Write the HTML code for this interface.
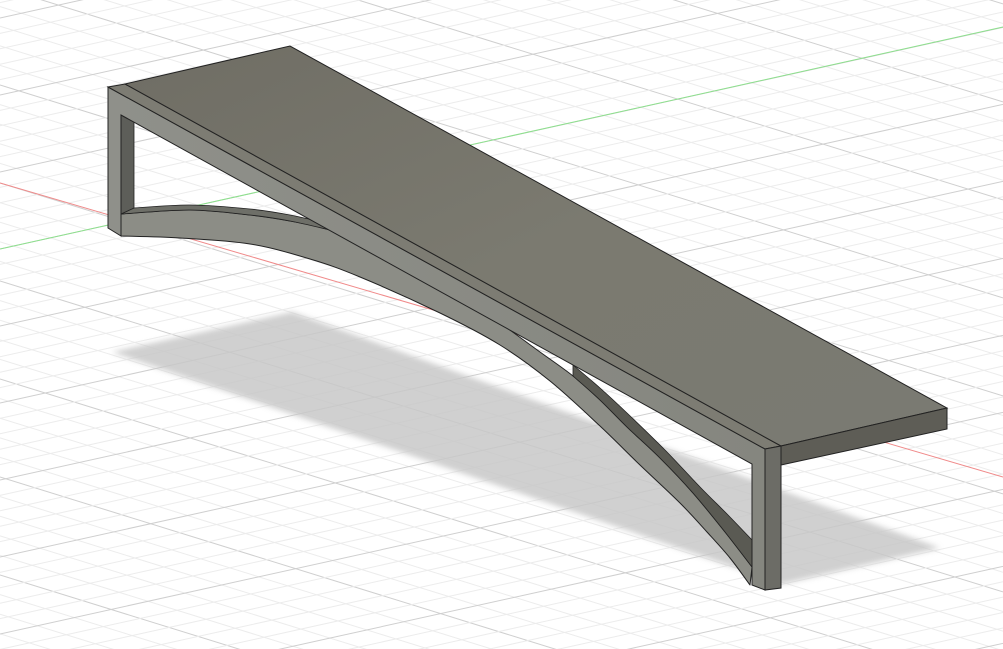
<!DOCTYPE html>
<html><head><meta charset="utf-8"><style>
html,body{margin:0;padding:0;background:#fff;overflow:hidden;width:1003px;height:649px}
svg{display:block;overflow:hidden}
</style></head><body>
<svg id="s" width="1003" height="649" viewBox="0 0 1003 649" xmlns="http://www.w3.org/2000/svg">
<defs>
<filter id="bl" x="-10%" y="-10%" width="120%" height="120%"><feGaussianBlur stdDeviation="3"/></filter>
<linearGradient id="top" x1="0" y1="0" x2="1" y2="1">
<stop offset="0" stop-color="#6f6d64"/><stop offset="0.5" stop-color="#7b7a70"/><stop offset="1" stop-color="#7a7a72"/>
</linearGradient>
<linearGradient id="fr" x1="0" y1="0" x2="1" y2="0">
<stop offset="0" stop-color="#8f908a"/><stop offset="1" stop-color="#85867f"/>
</linearGradient>
</defs>
<g id="grid"></g>
<line x1="0" y1="183" x2="1003" y2="477" stroke="#f08a8a" stroke-width="1"/>
<line x1="0" y1="249" x2="1003" y2="27" stroke="#8de08d" stroke-width="1"/>
<polygon points="112,352 292,312 940,548 782,584" fill="#c8c8c8" opacity="0.85" filter="url(#bl)"/>
<path id="arc" fill="#8c8d86" stroke="#222" stroke-width="1" stroke-linejoin="round"/>
<path id="dl" fill="#6e6f68" stroke="#222" stroke-width="0.8"/>
<path id="dr" fill="#5a5a53" stroke="#222" stroke-width="0.8" stroke-linejoin="round"/>
<path d="M121,115 L134,122 L134,208 L121,214 Z" fill="#5d5e59" stroke="#222" stroke-width="0.8"/>
<path d="M108,87 L765,449 L765,590 L752,585 L752,464 L121,115 L121,236 L108,228 Z" fill="url(#fr)" stroke="#222" stroke-width="1"/>
<polygon points="108,87 125,84 781,446 765,449" fill="#7d7c73" stroke="#222" stroke-width="1"/>
<polygon points="765,449 781,446 781,588 765,590" fill="#6c6c66" stroke="#222" stroke-width="1"/>
<polygon points="125,84 290,46 947,408 781,446" fill="url(#top)" stroke="#222" stroke-width="1"/>
<polygon points="781,446 947,408 947,429 781,465" fill="#5e5d56" stroke="#222" stroke-width="1"/>
</svg>
<script>
var g=document.getElementById('grid'),ns='http://www.w3.org/2000/svg';
function L(x1,y1,x2,y2,c){var l=document.createElementNS(ns,'line');l.setAttribute('x1',x1);l.setAttribute('y1',y1);l.setAttribute('x2',x2);l.setAttribute('y2',y2);l.setAttribute('stroke',c);l.setAttribute('stroke-width','1');g.appendChild(l);}
for(var i=-60;i<60;i++){var y=183+i*19.6;L(0,y,1003,y+1003*0.31,(i%5==0)?'#cfcfcf':'#ececec');}
for(var j=-80;j<80;j++){var y=249+j*15.4;L(0,y,1003,y-1003*0.221,(j%5==0)?'#cfcfcf':'#ececec');}
function cr(p,start){var d=start?'M'+p[0]+','+p[1]:'L'+p[0]+','+p[1];var n=p.length/2;
for(var k=0;k<n-1;k++){var i0=Math.max(k-1,0),i3=Math.min(k+2,n-1);
var x0=p[2*i0],y0=p[2*i0+1],x1=p[2*k],y1=p[2*k+1],x2=p[2*k+2],y2=p[2*k+3],x3=p[2*i3],y3=p[2*i3+1];
d+=' C'+(x1+(x2-x0)/6)+','+(y1+(y2-y0)/6)+' '+(x2-(x3-x1)/6)+','+(y2-(y3-y1)/6)+' '+x2+','+y2;}
return d;}
var outer=[121,236,180,238,250,244,310,259,360,277,440,313,500,345,550,381,600,426,640,465,680,503,707,532,730,558,750,585];
var topE=[752,567,725,532,693,493,660,458,627,427,600,400,573,376,540,352,490,316,440,284,390,254,330,230,290,221,250,215,190,210,121,214];
document.getElementById('arc').setAttribute('d',cr(outer,true)+' '+cr(topE,false)+' Z');
var dlt=[121,214,190,210,250,215,290,221,330,230];
var dlb=[330,224,290,215,250,209,190,205,134,208];
document.getElementById('dl').setAttribute('d',cr(dlt,true)+' '+cr(dlb,false)+' Z');
var drt=[573,365,600,388,627,413,665,450,700,487,728,515,752,540];
var drb=[752,567,725,532,693,493,660,458,627,427,600,400,573,376];
document.getElementById('dr').setAttribute('d',cr(drt,true)+' '+cr(drb,false)+' Z');
</script>
</body></html>
